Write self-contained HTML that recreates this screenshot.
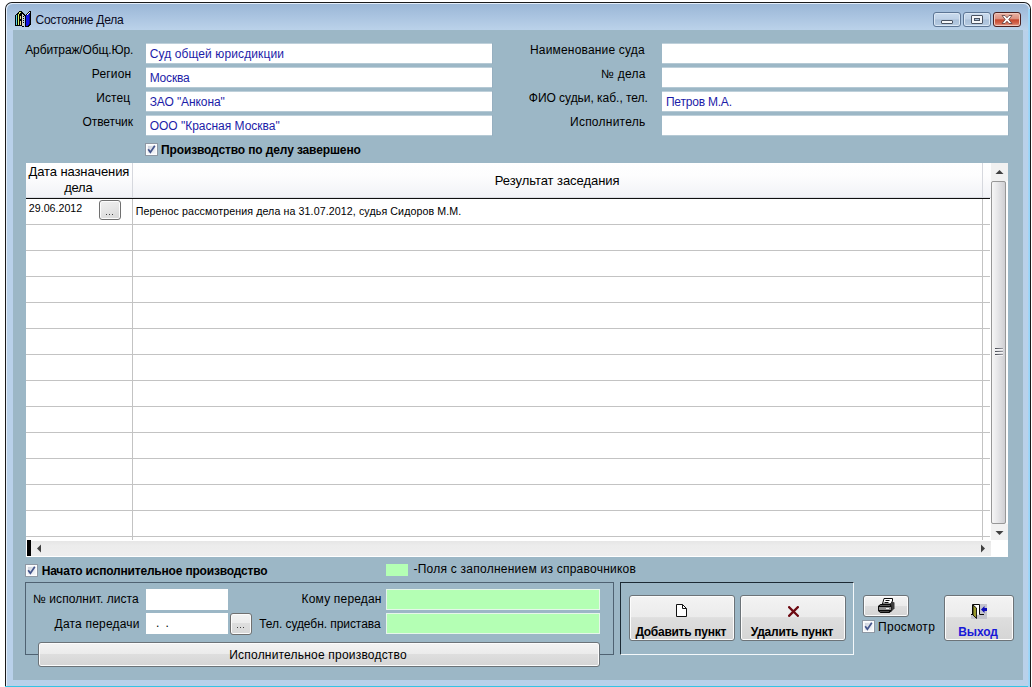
<!DOCTYPE html>
<html>
<head>
<meta charset="utf-8">
<title>Состояние Дела</title>
<style>
html,body{margin:0;padding:0;}
body{width:1032px;height:687px;position:relative;overflow:hidden;background:#fff;font-family:"Liberation Sans",sans-serif;font-size:12px;color:#000;}
.abs{position:absolute;}
.t{position:absolute;white-space:nowrap;}
#win{position:absolute;left:5px;top:2px;width:1026px;height:685px;background:#b9d1ea;border-radius:7px 7px 0 0;box-sizing:border-box;border:1px solid #1a1a1a;border-bottom:none;overflow:hidden;}
#winhl{position:absolute;left:0;top:0;right:0;bottom:0;border:1px solid #e4eefa;border-radius:6px 6px 0 0;border-bottom:none;}
#titlegrad{position:absolute;left:1px;top:1px;right:1px;height:27px;background:linear-gradient(#9bb7d6 0%,#a8c2df 40%,#bcd3ea 100%);border-radius:6px 6px 0 0;}
#client{position:absolute;left:13px;top:30px;width:1010px;height:650px;background:#9cb7c6;}
.inp{position:absolute;background:#fff;box-sizing:border-box;height:19px;}
.inpt{position:absolute;height:21px;width:346px;background:linear-gradient(rgba(255,255,255,.35) 0px,rgba(255,255,255,.35) 1px,#fff 1px,#fff 20px,rgba(255,255,255,.25) 20px,rgba(255,255,255,.25) 21px);box-shadow:1px 0 0 rgba(140,160,180,.35);}
.cb{position:absolute;width:13px;height:13px;box-sizing:border-box;border:1px solid #8e98a4;background:#f4f6f9;box-shadow:inset 0 0 0 1px #fdfdfe;}
.cbi{position:absolute;left:2px;top:2px;width:7px;height:7px;background:linear-gradient(135deg,#cdd2dc,#f4f5f8);}
.btn{position:absolute;box-sizing:border-box;border:1px solid #6c7378;border-radius:3px;background:linear-gradient(#f3f3f3 0%,#ebebeb 48%,#dedede 49%,#d5d5d5 100%);box-shadow:inset 0 0 0 1px #fcfcfc;}
.sbtn{position:absolute;box-sizing:border-box;border:1px solid #707070;border-radius:3px;background:linear-gradient(160deg,#f0f0f0 0%,#e6e6e6 45%,#d6d6d6 100%);box-shadow:inset 0 0 0 1px #fcfcfc;}
.dot{position:absolute;width:1.7px;height:1.7px;background:#111;border-radius:1px;}
.hline{position:absolute;left:26px;width:964px;height:1px;background:#c3c3c3;}
.wb{position:absolute;top:12px;width:28px;height:15px;box-sizing:border-box;border:1px solid #5c7594;border-radius:3px;background:linear-gradient(#c9dbee 0%,#bdd0e6 48%,#a9bfd8 52%,#b6cbe2 100%);box-shadow:inset 0 0 0 1px #dbe7f4;}
</style>
</head>
<body>
<div id="win"><div id="titlegrad"></div><div id="winhl"></div></div>
<div class="abs" style="left:5px;top:686px;width:1025px;height:1px;background:#35c4e4;"></div>
<div class="abs" style="left:1028px;top:9px;width:2px;height:678px;background:linear-gradient(90deg,#a8d4f4,#8fd6fb);"></div>
<svg class="abs" style="left:15px;top:11px" width="16" height="16" viewBox="0 0 16 16" shape-rendering="crispEdges"><rect x="4" y="0" width="3" height="1" fill="#000"/><rect x="14" y="0" width="2" height="1" fill="#000"/><rect x="3" y="1" width="1" height="1" fill="#000"/><rect x="4" y="1" width="2" height="1" fill="#d4f068"/><rect x="6" y="1" width="2" height="1" fill="#000"/><rect x="13" y="1" width="1" height="1" fill="#000"/><rect x="14" y="1" width="1" height="1" fill="#fff"/><rect x="15" y="1" width="1" height="1" fill="#000"/><rect x="2" y="2" width="2" height="1" fill="#000"/><rect x="4" y="2" width="1" height="1" fill="#d4f068"/><rect x="5" y="2" width="4" height="1" fill="#000"/><rect x="12" y="2" width="1" height="1" fill="#000"/><rect x="13" y="2" width="1" height="1" fill="#fff"/><rect x="14" y="2" width="1" height="1" fill="#0a0a8c"/><rect x="15" y="2" width="1" height="1" fill="#000"/><rect x="1" y="3" width="2" height="1" fill="#000"/><rect x="3" y="3" width="1" height="1" fill="#d4f068"/><rect x="4" y="3" width="3" height="1" fill="#000"/><rect x="7" y="3" width="1" height="1" fill="#d4d4cc"/><rect x="8" y="3" width="2" height="1" fill="#000"/><rect x="11" y="3" width="1" height="1" fill="#000"/><rect x="12" y="3" width="1" height="1" fill="#fff"/><rect x="13" y="3" width="1" height="1" fill="#1414e8"/><rect x="14" y="3" width="1" height="1" fill="#0a0a8c"/><rect x="15" y="3" width="1" height="1" fill="#000"/><rect x="0" y="4" width="1" height="1" fill="#000"/><rect x="1" y="4" width="1" height="1" fill="#58d4e4"/><rect x="2" y="4" width="1" height="1" fill="#000"/><rect x="3" y="4" width="1" height="1" fill="#d4f068"/><rect x="4" y="4" width="3" height="1" fill="#000"/><rect x="7" y="4" width="2" height="1" fill="#d4d4cc"/><rect x="9" y="4" width="2" height="1" fill="#000"/><rect x="11" y="4" width="3" height="1" fill="#1414e8"/><rect x="14" y="4" width="1" height="1" fill="#0a0a8c"/><rect x="15" y="4" width="1" height="1" fill="#000"/><rect x="0" y="5" width="1" height="1" fill="#000"/><rect x="1" y="5" width="1" height="1" fill="#58d4e4"/><rect x="2" y="5" width="1" height="1" fill="#000"/><rect x="3" y="5" width="1" height="1" fill="#d4f068"/><rect x="4" y="5" width="1" height="1" fill="#000"/><rect x="5" y="5" width="1" height="1" fill="#ead890"/><rect x="6" y="5" width="1" height="1" fill="#000"/><rect x="7" y="5" width="1" height="1" fill="#d4d4cc"/><rect x="8" y="5" width="1" height="1" fill="#000"/><rect x="10" y="5" width="1" height="1" fill="#000"/><rect x="11" y="5" width="3" height="1" fill="#1414e8"/><rect x="14" y="5" width="1" height="1" fill="#0a0a8c"/><rect x="15" y="5" width="1" height="1" fill="#000"/><rect x="0" y="6" width="1" height="1" fill="#000"/><rect x="1" y="6" width="1" height="1" fill="#58d4e4"/><rect x="2" y="6" width="1" height="1" fill="#000"/><rect x="3" y="6" width="1" height="1" fill="#d4f068"/><rect x="4" y="6" width="1" height="1" fill="#000"/><rect x="5" y="6" width="1" height="1" fill="#ead890"/><rect x="6" y="6" width="1" height="1" fill="#000"/><rect x="7" y="6" width="2" height="1" fill="#d4d4cc"/><rect x="10" y="6" width="1" height="1" fill="#000"/><rect x="11" y="6" width="3" height="1" fill="#1414e8"/><rect x="14" y="6" width="1" height="1" fill="#0a0a8c"/><rect x="15" y="6" width="1" height="1" fill="#000"/><rect x="0" y="7" width="1" height="1" fill="#000"/><rect x="1" y="7" width="1" height="1" fill="#58d4e4"/><rect x="2" y="7" width="1" height="1" fill="#000"/><rect x="3" y="7" width="1" height="1" fill="#d4f068"/><rect x="4" y="7" width="1" height="1" fill="#000"/><rect x="5" y="7" width="1" height="1" fill="#ead890"/><rect x="6" y="7" width="1" height="1" fill="#000"/><rect x="7" y="7" width="1" height="1" fill="#d4d4cc"/><rect x="8" y="7" width="1" height="1" fill="#000"/><rect x="10" y="7" width="1" height="1" fill="#000"/><rect x="11" y="7" width="3" height="1" fill="#1414e8"/><rect x="14" y="7" width="1" height="1" fill="#0a0a8c"/><rect x="15" y="7" width="1" height="1" fill="#000"/><rect x="0" y="8" width="1" height="1" fill="#000"/><rect x="1" y="8" width="1" height="1" fill="#58d4e4"/><rect x="2" y="8" width="1" height="1" fill="#000"/><rect x="3" y="8" width="1" height="1" fill="#d4f068"/><rect x="4" y="8" width="3" height="1" fill="#000"/><rect x="7" y="8" width="2" height="1" fill="#d4d4cc"/><rect x="10" y="8" width="1" height="1" fill="#000"/><rect x="11" y="8" width="3" height="1" fill="#1414e8"/><rect x="14" y="8" width="1" height="1" fill="#0a0a8c"/><rect x="15" y="8" width="1" height="1" fill="#000"/><rect x="0" y="9" width="1" height="1" fill="#000"/><rect x="1" y="9" width="1" height="1" fill="#58d4e4"/><rect x="2" y="9" width="1" height="1" fill="#000"/><rect x="3" y="9" width="1" height="1" fill="#d4f068"/><rect x="4" y="9" width="3" height="1" fill="#000"/><rect x="7" y="9" width="1" height="1" fill="#d4d4cc"/><rect x="8" y="9" width="1" height="1" fill="#000"/><rect x="10" y="9" width="1" height="1" fill="#000"/><rect x="11" y="9" width="3" height="1" fill="#1414e8"/><rect x="14" y="9" width="1" height="1" fill="#0a0a8c"/><rect x="15" y="9" width="1" height="1" fill="#000"/><rect x="0" y="10" width="1" height="1" fill="#000"/><rect x="1" y="10" width="1" height="1" fill="#58d4e4"/><rect x="2" y="10" width="1" height="1" fill="#000"/><rect x="3" y="10" width="1" height="1" fill="#d4f068"/><rect x="4" y="10" width="1" height="1" fill="#000"/><rect x="5" y="10" width="1" height="1" fill="#ead890"/><rect x="6" y="10" width="1" height="1" fill="#000"/><rect x="7" y="10" width="2" height="1" fill="#d4d4cc"/><rect x="10" y="10" width="1" height="1" fill="#000"/><rect x="11" y="10" width="3" height="1" fill="#1414e8"/><rect x="14" y="10" width="1" height="1" fill="#0a0a8c"/><rect x="15" y="10" width="1" height="1" fill="#000"/><rect x="0" y="11" width="1" height="1" fill="#000"/><rect x="1" y="11" width="1" height="1" fill="#58d4e4"/><rect x="2" y="11" width="1" height="1" fill="#000"/><rect x="3" y="11" width="1" height="1" fill="#d4f068"/><rect x="4" y="11" width="1" height="1" fill="#000"/><rect x="5" y="11" width="1" height="1" fill="#ead890"/><rect x="6" y="11" width="1" height="1" fill="#000"/><rect x="7" y="11" width="1" height="1" fill="#d4d4cc"/><rect x="8" y="11" width="1" height="1" fill="#000"/><rect x="10" y="11" width="1" height="1" fill="#000"/><rect x="11" y="11" width="3" height="1" fill="#1414e8"/><rect x="14" y="11" width="1" height="1" fill="#0a0a8c"/><rect x="15" y="11" width="1" height="1" fill="#000"/><rect x="0" y="12" width="1" height="1" fill="#000"/><rect x="1" y="12" width="1" height="1" fill="#58d4e4"/><rect x="2" y="12" width="1" height="1" fill="#000"/><rect x="3" y="12" width="1" height="1" fill="#d4f068"/><rect x="4" y="12" width="1" height="1" fill="#000"/><rect x="5" y="12" width="1" height="1" fill="#ead890"/><rect x="6" y="12" width="1" height="1" fill="#000"/><rect x="7" y="12" width="2" height="1" fill="#d4d4cc"/><rect x="10" y="12" width="1" height="1" fill="#000"/><rect x="11" y="12" width="3" height="1" fill="#1414e8"/><rect x="14" y="12" width="1" height="1" fill="#0a0a8c"/><rect x="15" y="12" width="1" height="1" fill="#000"/><rect x="0" y="13" width="1" height="1" fill="#000"/><rect x="1" y="13" width="1" height="1" fill="#58d4e4"/><rect x="2" y="13" width="1" height="1" fill="#000"/><rect x="3" y="13" width="1" height="1" fill="#d4f068"/><rect x="4" y="13" width="1" height="1" fill="#000"/><rect x="5" y="13" width="1" height="1" fill="#ead890"/><rect x="6" y="13" width="1" height="1" fill="#000"/><rect x="7" y="13" width="2" height="1" fill="#d4d4cc"/><rect x="10" y="13" width="1" height="1" fill="#000"/><rect x="11" y="13" width="3" height="1" fill="#1414e8"/><rect x="14" y="13" width="2" height="1" fill="#000"/><rect x="0" y="14" width="7" height="1" fill="#000"/><rect x="7" y="14" width="2" height="1" fill="#d4d4cc"/><rect x="10" y="14" width="1" height="1" fill="#000"/><rect x="11" y="14" width="2" height="1" fill="#1414e8"/><rect x="13" y="14" width="2" height="1" fill="#000"/><rect x="7" y="15" width="2" height="1" fill="#000"/><rect x="10" y="15" width="4" height="1" fill="#000"/></svg>
<div class="t" style="left:35.5px;top:13px;font-size:12px;line-height:15px;letter-spacing:-0.24px;color:#0a0a1e;">Состояние Дела</div>
<div class="wb" style="left:933px;"></div>
<div class="abs" style="left:941px;top:20px;width:12px;height:4px;box-sizing:border-box;border:1px solid #4a5362;background:#f4f6f9;border-radius:1px;"></div>
<div class="wb" style="left:963px;"></div>
<div class="abs" style="left:971px;top:15px;width:12px;height:9px;box-sizing:border-box;border:1px solid #4a5362;background:#f4f6f9;border-radius:1px;"></div>
<div class="abs" style="left:974px;top:18px;width:6px;height:3px;box-sizing:border-box;border:1px solid #4a5362;background:#a9bfd8;"></div>
<div class="wb" style="left:993px;border-color:#4a2020;background:linear-gradient(#e9b3a6 0%,#dc8f7e 46%,#c6472d 52%,#d2644c 78%,#e6a293 100%);box-shadow:inset 0 0 0 1px #f1c8bc;"></div>
<svg class="abs" style="left:1000px;top:14px" width="14" height="11" viewBox="0 0 14 11"><path d="M2 1.5 L5 1.5 L7 3.8 L9 1.5 L12 1.5 L8.8 5.5 L12 9.5 L9 9.5 L7 7.2 L5 9.5 L2 9.5 L5.2 5.5 Z" fill="#fff" stroke="#5a3a3a" stroke-width="0.8"/></svg>
<div id="client"></div>
<div class="t" style="left:25.2px;top:43px;font-size:12px;line-height:14px;letter-spacing:-0.12px;">Арбитраж/Общ.Юр.</div>
<div class="t" style="left:91.8px;top:67px;font-size:12px;line-height:14px;letter-spacing:0.18px;">Регион</div>
<div class="t" style="left:96.2px;top:91px;font-size:12px;line-height:14px;letter-spacing:0.1px;">Истец</div>
<div class="t" style="left:82.5px;top:115px;font-size:12px;line-height:14px;letter-spacing:-0.08px;">Ответчик</div>
<div class="inpt" style="left:146px;top:43px;"></div>
<div class="t" style="left:149.7px;top:47px;font-size:12px;line-height:14px;letter-spacing:0.105px;color:#1c1ca8;">Суд общей юрисдикции</div>
<div class="inpt" style="left:146px;top:67px;"></div>
<div class="t" style="left:149.7px;top:71px;font-size:12px;line-height:14px;letter-spacing:-0.2px;color:#1c1ca8;">Москва</div>
<div class="inpt" style="left:146px;top:91px;"></div>
<div class="t" style="left:149.7px;top:95px;font-size:12px;line-height:14px;letter-spacing:-0.1px;color:#1c1ca8;">ЗАО "Анкона"</div>
<div class="inpt" style="left:146px;top:115px;"></div>
<div class="t" style="left:149.7px;top:119px;font-size:12px;line-height:14px;letter-spacing:-0.015px;color:#1c1ca8;">ООО "Красная Москва"</div>
<div class="t" style="left:530px;top:43px;font-size:12px;line-height:14px;letter-spacing:0.18px;">Наименование суда</div>
<div class="t" style="left:601px;top:67px;font-size:12px;line-height:14px;letter-spacing:0.25px;">№ дела</div>
<div class="t" style="left:528.8px;top:91px;font-size:12px;line-height:14px;letter-spacing:-0.03px;">ФИО судьи, каб., тел.</div>
<div class="t" style="left:570px;top:115px;font-size:12px;line-height:14px;letter-spacing:0.25px;">Исполнитель</div>
<div class="inpt" style="left:662px;top:43px;"></div>
<div class="inpt" style="left:662px;top:67px;"></div>
<div class="inpt" style="left:662px;top:91px;"></div>
<div class="inpt" style="left:662px;top:115px;"></div>
<div class="t" style="left:665.9px;top:95px;font-size:12px;line-height:14px;letter-spacing:-0.2px;color:#1c1ca8;">Петров М.А.</div>
<div class="cb" style="left:145px;top:143px;"><div class="cbi"></div></div>
<svg class="abs" style="left:145px;top:143px" width="13" height="13" viewBox="0 0 13 13"><path d="M3.2 6.2 L5.4 9.3 L9.8 2.8" fill="none" stroke="#44558c" stroke-width="1.7"/></svg>
<div class="t" style="left:161px;top:143px;font-size:12px;line-height:14px;letter-spacing:-0.128px;font-weight:bold;">Производство по делу завершено</div>
<div class="abs" style="left:26px;top:163px;width:982px;height:394px;background:#fff;"></div>
<div class="abs" style="left:26px;top:163px;width:965px;height:35px;background:linear-gradient(#ffffff 0%,#fdfdfe 35%,#f1f2f6 100%);"></div>
<div class="abs" style="left:26px;top:197px;width:965px;height:1px;background:#dcdee4;"></div>
<div class="abs" style="left:26px;top:198px;width:964px;height:1px;background:#101010;"></div>
<div class="hline" style="top:224px"></div>
<div class="hline" style="top:250px"></div>
<div class="hline" style="top:276px"></div>
<div class="hline" style="top:302px"></div>
<div class="hline" style="top:328px"></div>
<div class="hline" style="top:354px"></div>
<div class="hline" style="top:380px"></div>
<div class="hline" style="top:406px"></div>
<div class="hline" style="top:432px"></div>
<div class="hline" style="top:458px"></div>
<div class="hline" style="top:484px"></div>
<div class="hline" style="top:510px"></div>
<div class="hline" style="top:536px"></div>
<div class="abs" style="left:132px;top:163px;width:1px;height:34px;background:#d6d8de;"></div>
<div class="abs" style="left:132px;top:199px;width:1px;height:341px;background:#c3c3c3;"></div>
<div class="abs" style="left:982px;top:163px;width:1px;height:34px;background:#d6d8de;"></div>
<div class="abs" style="left:982px;top:199px;width:1px;height:341px;background:#c3c3c3;"></div>
<div class="t" style="left:28.5px;top:164px;font-size:13px;line-height:16px;letter-spacing:-0.1px;">Дата назначения</div>
<div class="t" style="left:64.2px;top:180px;font-size:13px;line-height:16px;letter-spacing:-0.24px;">дела</div>
<div class="t" style="left:494.8px;top:173px;font-size:13px;line-height:16px;letter-spacing:-0.05px;">Результат заседания</div>
<div class="t" style="left:28.8px;top:202px;font-size:10.67px;line-height:13px;letter-spacing:0.01px;">29.06.2012</div>
<div class="sbtn" style="left:99px;top:200px;width:22px;height:20px;"></div>
<div class="dot" style="left:105.65px;top:213.65px;"></div>
<div class="dot" style="left:108.65px;top:213.65px;"></div>
<div class="dot" style="left:111.65px;top:213.65px;"></div>
<div class="t" style="left:135.8px;top:205px;font-size:10.67px;line-height:13px;letter-spacing:0.094px;">Перенос рассмотрения дела на 31.07.2012, судья Сидоров М.М.</div>
<div class="abs" style="left:991px;top:163px;width:17px;height:377px;background:#f1f1f1;"></div>
<div class="abs" style="left:1006px;top:181px;width:2px;height:343px;background:#fdfdfd;"></div>
<div class="abs" style="left:991px;top:181px;width:15px;height:343px;box-sizing:border-box;border:1px solid #979797;border-radius:2px;background:linear-gradient(90deg,#f6f6f6 0%,#e6e6e8 45%,#cfcfd3 100%);"></div>
<svg class="abs" style="left:995px;top:169px" width="9" height="6" viewBox="0 0 9 6"><path d="M0.5 5 L4.5 1 L8.5 5 Z" fill="#404040"/></svg>
<svg class="abs" style="left:995px;top:530px" width="9" height="6" viewBox="0 0 9 6"><path d="M0.5 1 L4.5 5 L8.5 1 Z" fill="#404040"/></svg>
<div class="abs" style="left:995px;top:348px;width:8px;height:1px;background:linear-gradient(90deg,#454850,#9a9ca4);"></div>
<div class="abs" style="left:995px;top:349px;width:8px;height:1px;background:#f4f4f6;"></div>
<div class="abs" style="left:995px;top:351px;width:8px;height:1px;background:linear-gradient(90deg,#454850,#9a9ca4);"></div>
<div class="abs" style="left:995px;top:352px;width:8px;height:1px;background:#f4f4f6;"></div>
<div class="abs" style="left:995px;top:354px;width:8px;height:1px;background:linear-gradient(90deg,#454850,#9a9ca4);"></div>
<div class="abs" style="left:995px;top:355px;width:8px;height:1px;background:#f4f4f6;"></div>
<div class="abs" style="left:27px;top:541px;width:964px;height:15px;background:linear-gradient(#e6e6e6 0%,#ececec 30%,#eeeeee 100%);"></div>
<div class="abs" style="left:27px;top:540px;width:4px;height:16px;background:#000;"></div>
<svg class="abs" style="left:36px;top:544px" width="6" height="9" viewBox="0 0 6 9"><path d="M5 0.5 L1 4.5 L5 8.5 Z" fill="#404040"/></svg>
<svg class="abs" style="left:980px;top:544px" width="6" height="9" viewBox="0 0 6 9"><path d="M1 0.5 L5 4.5 L1 8.5 Z" fill="#404040"/></svg>
<div class="cb" style="left:25px;top:564px;"><div class="cbi"></div></div>
<svg class="abs" style="left:25px;top:564px" width="13" height="13" viewBox="0 0 13 13"><path d="M3.2 6.2 L5.4 9.3 L9.8 2.8" fill="none" stroke="#44558c" stroke-width="1.7"/></svg>
<div class="t" style="left:41.7px;top:564px;font-size:12px;line-height:14px;letter-spacing:-0.186px;font-weight:bold;">Начато исполнительное производство</div>
<div class="abs" style="left:386px;top:564px;width:22px;height:12px;background:#b4ffb4;"></div>
<div class="t" style="left:413.5px;top:562px;font-size:12px;line-height:14px;letter-spacing:0.24px;">-Поля с заполнением из справочников</div>
<div class="abs" style="left:25px;top:582px;width:589px;height:73px;box-sizing:border-box;border:1px solid #4f6272;"></div>
<div class="t" style="left:33px;top:592px;font-size:12px;line-height:14px;letter-spacing:0.06px;">№ исполнит. листа</div>
<div class="t" style="left:54.6px;top:617px;font-size:12px;line-height:14px;letter-spacing:0.2px;">Дата передачи</div>
<div class="inp" style="left:146px;top:589px;width:82px;height:21px;"></div>
<div class="inp" style="left:146px;top:613px;width:82px;height:21px;"></div>
<div class="t" style="left:156px;top:616px;font-size:12px;line-height:14px;">.</div>
<div class="t" style="left:165.5px;top:616px;font-size:12px;line-height:14px;">.</div>
<div class="sbtn" style="left:230px;top:613px;width:22px;height:22px;background:linear-gradient(#f3f3f3 0%,#ececec 45%,#dedede 47%,#d8d8d8 100%);"></div>
<div class="dot" style="left:236.65px;top:626.65px;"></div>
<div class="dot" style="left:239.65px;top:626.65px;"></div>
<div class="dot" style="left:242.65px;top:626.65px;"></div>
<div class="t" style="left:301.6px;top:592px;font-size:12px;line-height:14px;letter-spacing:0.176px;">Кому передан</div>
<div class="t" style="left:259.2px;top:617px;font-size:12px;line-height:14px;letter-spacing:-0.066px;">Тел. судебн. пристава</div>
<div class="inp" style="left:386px;top:589px;width:214px;height:21px;background:#b4ffb4;border:1px solid #e6f6ea;"></div>
<div class="inp" style="left:386px;top:613px;width:214px;height:21px;background:#b4ffb4;border:1px solid #e6f6ea;"></div>
<div class="btn" style="left:38px;top:642px;width:562px;height:25px;"></div>
<div class="t" style="left:229.3px;top:648px;font-size:12px;line-height:14px;letter-spacing:0.2px;">Исполнительное производство</div>
<div class="abs" style="left:620px;top:582px;width:234px;height:73px;box-sizing:border-box;border:1px solid;border-color:#1c2a34 #f4f8fa #f4f8fa #1c2a34;"></div>
<div class="btn" style="left:629px;top:595px;width:106px;height:46px;"></div>
<svg class="abs" style="left:676px;top:604px" width="11" height="13" viewBox="0 0 11 13"><path d="M0.5 0.5 L6.5 0.5 L10.5 4.5 L10.5 12.5 L0.5 12.5 Z" fill="#fff" stroke="#111" stroke-width="1"/><path d="M6.5 0.5 L6.5 4.5 L10.5 4.5" fill="none" stroke="#111" stroke-width="1"/></svg>
<div class="t" style="left:635.4px;top:625px;font-size:12px;line-height:14px;letter-spacing:-0.28px;font-weight:bold;">Добавить пункт</div>
<div class="btn" style="left:740px;top:595px;width:106px;height:46px;"></div>
<svg class="abs" style="left:788px;top:606px" width="11" height="11" viewBox="0 0 11 11"><path d="M1.2 1.2 L9.8 9.8 M9.8 1.2 L1.2 9.8" stroke="#6e0a12" stroke-width="2.3" stroke-linecap="square" fill="none"/></svg>
<div class="t" style="left:750.8px;top:625px;font-size:12px;line-height:14px;letter-spacing:-0.26px;font-weight:bold;">Удалить пункт</div>
<div class="btn" style="left:863px;top:595px;width:46px;height:22px;"></div>
<svg class="abs" style="left:878px;top:598px" width="17" height="15" viewBox="0 0 17 15"><path d="M4.5 6 L6 0.5 L14.5 0.5 L14.5 3 L12.5 6 Z" fill="#fff" stroke="#0a0a0a" stroke-width="1"/><path d="M7.5 2.5 L11.5 2.5 M6.5 4.5 L10.5 4.5" stroke="#111" stroke-width="1"/><path d="M12 6 L14 3.5 L16.5 4.5 L16.5 10.5 L13 14 L12 14 Z" fill="#3c3c3c"/><path d="M2.5 6 L12.5 6 L13.5 8 L13.5 13 L11.5 15 L2.5 15 L0 13 L0 8 Z" fill="#0a0a0a"/><rect x="1" y="9" width="12" height="3" fill="#8e8e8e"/><rect x="8" y="10" width="3" height="1" fill="#f4f4f4"/><rect x="2" y="7" width="10" height="0.8" fill="#6a6a6a"/><rect x="2" y="13" width="9" height="0.8" fill="#5a5a5a"/></svg>
<div class="cb" style="left:862px;top:620px;"><div class="cbi"></div></div>
<svg class="abs" style="left:862px;top:620px" width="13" height="13" viewBox="0 0 13 13"><path d="M3.2 6.2 L5.4 9.3 L9.8 2.8" fill="none" stroke="#44558c" stroke-width="1.7"/></svg>
<div class="t" style="left:878px;top:620px;font-size:12px;line-height:14px;letter-spacing:0.29px;">Просмотр</div>
<div class="btn" style="left:944px;top:595px;width:70px;height:46px;"></div>
<svg class="abs" style="left:971px;top:604px" width="16" height="15" viewBox="0 0 16 15"><rect x="9" y="0" width="7" height="15" fill="#c4c4cc"/><rect x="0" y="11" width="16" height="4" fill="#c4c4cc"/><rect x="2" y="1" width="6.5" height="9.5" fill="#fff"/><path d="M1.5 10.5 L1.5 0.5 L8.5 0.5 L8.5 10.5 L13 10.5 M0 10.5 L2 10.5" fill="none" stroke="#0a0a0a" stroke-width="1"/><path d="M2 1 L5.5 4 L5.5 14.5 L2 11 Z" fill="#9a9a2c" stroke="#0a0a0a" stroke-width="0.9"/><path d="M10 5.5 L13.5 2 L13.5 4 L16 4 L16 7 L13.5 7 L13.5 9 Z" fill="#0c0cb8"/></svg>
<div class="t" style="left:958.3px;top:625px;font-size:12px;line-height:14px;letter-spacing:-0.11px;font-weight:bold;color:#1818d8;">Выход</div>
</body>
</html>
